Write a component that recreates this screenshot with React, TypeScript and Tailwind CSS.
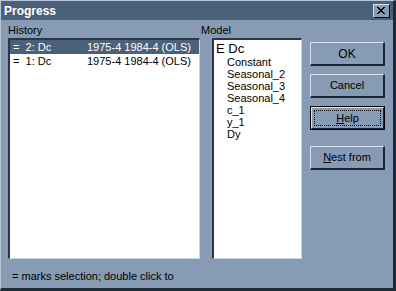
import React from "react";

const font = { fontFamily: '"Liberation Sans", Arial, sans-serif' };

function Btn({ children, def, size = "text-[11px]" }: { children: React.ReactNode; def?: boolean; size?: string }) {
  if (def) {
    return (
      <div className="w-[75px] h-[24px] border border-black">
        <div className="w-full h-full border-t border-l border-t-[#d8e2ee] border-l-[#d8e2ee] border-b border-r border-b-[#1d2733] border-r-[#1d2733] flex items-center justify-center p-[2px]">
          <div className="w-full h-full border border-dotted border-black flex items-center justify-center text-[11px] text-black leading-none">
            {children}
          </div>
        </div>
      </div>
    );
  }
  return (
    <div className={`w-[75px] h-[24px] border-t border-l border-t-[#d8e2ee] border-l-[#d8e2ee] border-b-2 border-r-2 border-b-[#1d2733] border-r-[#1d2733] flex items-center justify-center ${size} text-black leading-none`}>
      {children}
    </div>
  );
}

export default function App() {
  const models = ["Constant", "Seasonal_2", "Seasonal_3", "Seasonal_4", "c_1", "y_1", "Dy"];
  return (
    <div
      className="w-[396px] h-[291px] bg-[#879bb5] border-l border-t border-l-[#b8c6d6] border-t-[#b8c6d6] border-r-[3px] border-b-[3px] border-r-[#1e2a38] border-b-[#1e2a38] flex flex-col overflow-hidden"
      style={font}
    >
      <div className="h-[19px] bg-[#4b6079] flex items-center justify-between pl-[3px] pr-[3px]">
        <span className="text-white font-bold text-[12px] leading-none">Progress</span>
        <div className="w-[17px] h-[14px] bg-[#879bb5] border-t border-l border-t-[#d8e2ee] border-l-[#d8e2ee] border-b border-r border-b-black border-r-black flex items-center justify-center">
          <svg width="9" height="8" viewBox="0 0 9 8">
            <path d="M1 0 L8 7 M0 0 L7 7 M8 0 L1 7 M7 0 L0 7" stroke="black" strokeWidth="1" shapeRendering="crispEdges" />
          </svg>
        </div>
      </div>
      <div className="flex pl-[7px] pt-[2px] gap-[12px]">
        <div className="flex flex-col w-[192px]">
          <div className="h-[16px] text-[11px] text-black leading-none pt-[3px]">History</div>
          <div className="h-[221px] bg-white border-t-2 border-l-2 border-t-[#2a3646] border-l-[#2a3646] border-b border-r border-b-[#c8d4e2] border-r-[#c8d4e2] text-[11px] leading-none">
            <div className="h-[14px] bg-[#4b6079] text-white flex items-center">
              <span className="w-[77px] pl-[3px] whitespace-pre">=  2: Dc</span>
              <span>1975-4 1984-4 (OLS)</span>
            </div>
            <div className="h-[14px] text-black flex items-center">
              <span className="w-[77px] pl-[3px] whitespace-pre">=  1: Dc</span>
              <span>1975-4 1984-4 (OLS)</span>
            </div>
          </div>
        </div>
        <div className="flex flex-col w-[90px]">
          <div className="h-[16px] text-[11px] text-black leading-none pt-[3px] -ml-[11px]">Model</div>
          <div className="h-[221px] bg-white border-t-2 border-l-2 border-t-[#2a3646] border-l-[#2a3646] border-b border-r border-b-[#c8d4e2] border-r-[#c8d4e2] text-black pl-[2px]">
            <div className="text-[13px] leading-[15px] pt-[1px]">E Dc</div>
            {models.map((m) => (
              <div key={m} className="text-[11px] leading-[12px] pl-[11px]">{m}</div>
            ))}
          </div>
        </div>
        <div className="flex flex-col pt-[20px] -ml-[4px]">
          <Btn size="text-[12px]">OK</Btn>
          <div className="h-[8px]" />
          <Btn>Cancel</Btn>
          <div className="h-[8px]" />
          <Btn def>
            <span><u>H</u>elp</span>
          </Btn>
          <div className="h-[16px]" />
          <Btn>
            <span><u>N</u>est from</span>
          </Btn>
        </div>
      </div>
      <div className="pl-[11px] pt-[12px] text-[11px] text-black leading-none">= marks selection; double click to</div>
    </div>
  );
}
